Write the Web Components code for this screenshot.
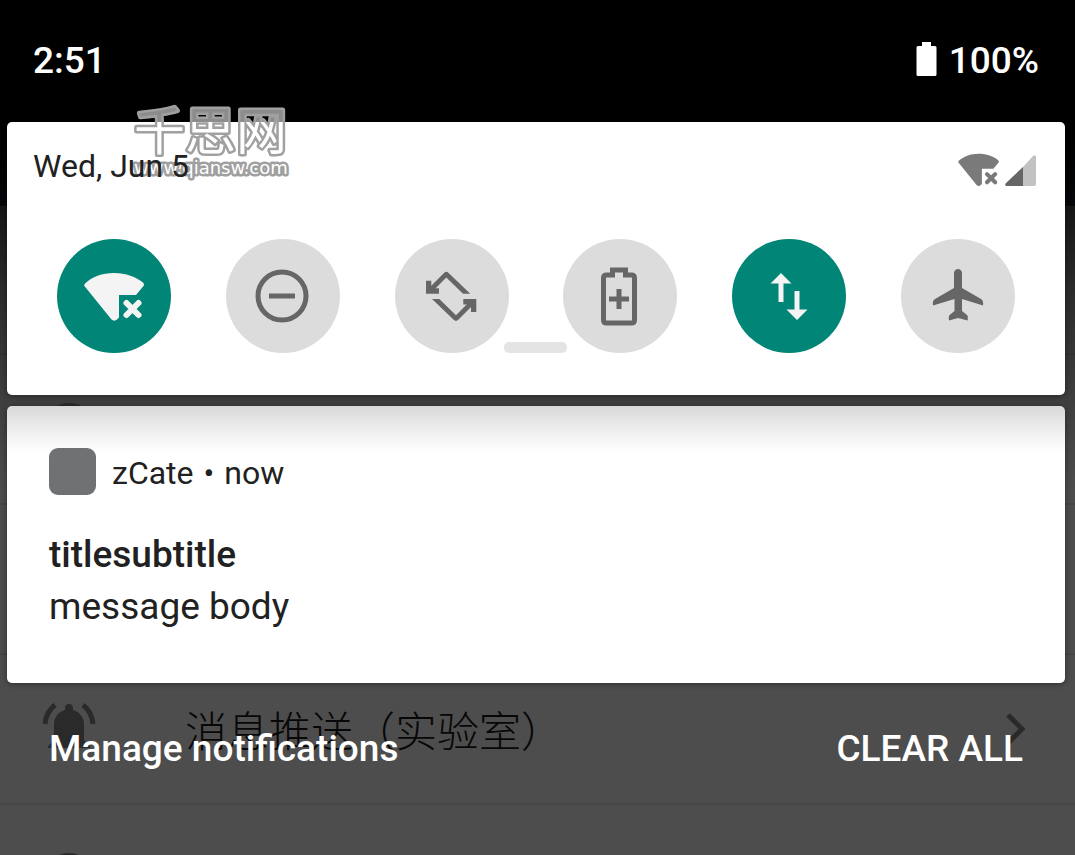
<!DOCTYPE html>
<html lang="en">
<head>
<meta charset="utf-8">
<meta name="viewport" content="width=device-width, initial-scale=1">
<title>Notifications</title>
<style>
    html, body {
        margin: 0;
        height: 100%;
    }
    body {
        background-color: #4d4d4d;
        font-family: Roboto, "Noto Sans CJK SC", sans-serif;
        color: #212121;
        overflow: hidden;
    }
</style>
</head>
<body>
<phone-screen>
    <settings-list slot="background"></settings-list>
    <status-bar time="2:51" battery="100%"></status-bar>
    <quick-settings date="Wed, Jun 5">
        <quick-tile icon="wifi" label="Wi-Fi" active></quick-tile>
        <quick-tile icon="dnd" label="Do not disturb"></quick-tile>
        <quick-tile icon="rotate" label="Auto-rotate"></quick-tile>
        <quick-tile icon="battery" label="Battery saver"></quick-tile>
        <quick-tile icon="data" label="Mobile data" active></quick-tile>
        <quick-tile icon="plane" label="Airplane mode"></quick-tile>
    </quick-settings>
    <notification-card app="zCate" when="now">
        <span slot="title">titlesubtitle</span>
        <span slot="body">message body</span>
    </notification-card>
    <shade-footer></shade-footer>
    <water-mark slot="overlay"></water-mark>
</phone-screen>

<script>
const icons = {
    wifi: `<path fill="currentColor" d="M1 14.500C8 8 18 4 30 4s22 4 29 9.500c1 1 1.300 2.500.500 3.500L52 26H35v22.500l-2 2c-1.500 1.500-4 1.500-5.500 0L.800 17.500c-.900-1-.700-2.200.200-3z"/>
        <path stroke="currentColor" stroke-width="6" stroke-linecap="round" d="M42.500 34l12 12M54.500 34l-12 12"/>`,
    dnd: `<circle cx="29" cy="30" r="24" fill="none" stroke="currentColor" stroke-width="5"/><path stroke="currentColor" stroke-width="5" d="M16 30h26"/>`,
    rotate: `<g fill="currentColor"><path d="M6 23L22 7q2.300-2.300 4.600 0L48.300 27.700H41L24.300 11.500 11 25z"/><path d="M4 14.700h5.300v7.600H17v5.400H4z"/></g>
        <g fill="currentColor" transform="rotate(180 29.150 30.400)"><path d="M6 23L22 7q2.300-2.300 4.600 0L48.300 27.700H41L24.300 11.500 11 25z"/><path d="M4 14.700h5.300v7.600H17v5.400H4z"/></g>`,
    battery: `<path fill="none" stroke="currentColor" stroke-width="5" d="M22.500 4h13v5h6q3 0 3 3v42q0 3-3 3h-25q-3 0-3-3V12q0-3 3-3h6z"/>
        <path stroke="currentColor" stroke-width="5" d="M19 33h20M29 23v20"/>`,
    data: `<path fill="currentColor" d="M22 7l10.500 10.500h-8V36h-5V17.500h-8zM38 54L27.500 43.500h8V25h5v18.500h8z"/>`,
    plane: `<path fill="currentColor" d="M30 3c2.200 0 4 1.800 4 4v15l19 11c2 1.300 2.500 3 2 6.500L34 33v12l5 4c.800.800 1 1.500.700 5.500L30 52l-9 2.500c-.500-3.500-.200-4.500.700-5.500l4.800-4V33L5 39.500c-.500-3.500 0-5.200 2-6.500l19-11V7c0-2.200 1.800-4 4-4z"/>`
};

class PhoneScreen extends HTMLElement {

    constructor() {
        super();
        this.shadow = this.attachShadow({ mode: 'open' });
    }

    connectedCallback() {
        this.shadow.innerHTML =
        `
        <style>
            :host {
                display: grid;
                grid-template: 100% / 100%;
                height: 100%;
                overflow: hidden;
            }
            .background, .shade, .overlay {
                grid-area: 1 / 1;
                min-height: 0;
            }
            .shade {
                display: flex;
                flex-direction: column;
            }
            .overlay {
                z-index: 1;
                pointer-events: none;
            }
        </style>
        <div class="background"><slot name="background"></slot></div>
        <main class="shade"><slot></slot></main>
        <div class="overlay"><slot name="overlay"></slot></div>
        `;
    }
}

class SettingsList extends HTMLElement {

    constructor() {
        super();
        this.shadow = this.attachShadow({ mode: 'open' });
    }

    connectedCallback() {
        this.shadow.innerHTML =
        `
        <style>
            :host {
                display: block;
                height: 100%;
                overflow: hidden;
                background: linear-gradient(#000 0, #000 130px, #05070a 206px, #161616 206px, #2c2c2c 290px, #3d3d3d 390px, #4d4d4d 490px);
            }
            .header {
                height: 205px;
            }
            .row {
                display: flex;
                align-items: center;
                box-sizing: border-box;
                height: 150px;
                padding: 0 35px 0 39px;
                border-bottom: 2px solid rgba(0,0,0,.08);
                color: #070707;
            }
            .row svg {
                flex: none;
                width: 60px;
                height: 60px;
                color: #2a2a2a;
            }
            .row span {
                flex: 1;
                margin-left: 86px;
                font-family: "Noto Sans CJK SC", sans-serif;
                font-size: 42px;
                font-weight: 300;
                line-height: 60px;
            }
        </style>
        <div class="header"></div>
        <div class="row"></div>
        <div class="row"><svg viewBox="0 0 60 60"><circle cx="30" cy="30" r="26" fill="currentColor"/></svg></div>
        <div class="row"></div>
        <div class="row">
            <svg viewBox="0 0 60 60">
                <path fill="currentColor" d="M26 9q0-4 4-4t4 4v2q11 3 11 15v15l6 6v2H9v-2l6-6V26q0-12 11-15z"/>
                <path fill="none" stroke="currentColor" stroke-width="5" d="M6 25Q7 13 16 6M54 25Q53 13 44 6"/>
            </svg>
            <span>消息推送（实验室）</span>
            <svg viewBox="0 0 60 60"><path fill="none" stroke="currentColor" stroke-width="5" d="M28 16l14 14-14 14"/></svg>
        </div>
        <div class="row"><svg viewBox="0 0 60 60"><circle cx="30" cy="30" r="26" fill="currentColor"/></svg></div>
        `;
    }
}

class StatusBar extends HTMLElement {

    constructor() {
        super();
        this.shadow = this.attachShadow({ mode: 'open' });
    }

    connectedCallback() {
        this.shadow.innerHTML =
        `
        <style>
            :host {
                display: flex;
                flex: none;
                justify-content: space-between;
                align-items: center;
                box-sizing: border-box;
                height: 122px;
                padding: 0 36px 0 33px;
                background-color: #000;
                color: #fff;
                font-size: 37px;
                font-weight: 500;
                line-height: 44px;
            }
            .battery {
                display: flex;
                align-items: center;
                gap: 12px;
            }
            svg {
                width: 21px;
                height: 34px;
                padding-bottom: 4px;
            }
        </style>
        <time>${this.getAttribute('time')}</time>
        <div class="battery">
            <svg viewBox="0 0 21 34"><path fill="#fff" d="M6 0h9v4h4q1.500 0 1.500 1.500v27q0 1.500-1.500 1.500H2q-1.500 0-1.500-1.500v-27Q.500 4 2 4h4z"/></svg>
            <span>${this.getAttribute('battery')}</span>
        </div>
        `;
    }
}

class QuickSettings extends HTMLElement {

    constructor() {
        super();
        this.shadow = this.attachShadow({ mode: 'open' });
    }

    connectedCallback() {
        this.shadow.innerHTML =
        `
        <style>
            :host {
                display: block;
                position: relative;
                margin: 0 10px 11px 7px;
                padding-bottom: 42px;
                background-color: #fff;
                border-radius: 5px;
                box-shadow: 0 1px 6px rgba(0,0,0,.4);
            }
            header {
                display: flex;
                justify-content: space-between;
                align-items: center;
                height: 88px;
                padding: 0 29px 0 26px;
                font-size: 32px;
                line-height: 40px;
            }
            /* the date stays readable above the watermark */
            .date {
                position: relative;
                z-index: 2;
            }
            .signals {
                display: flex;
                align-items: flex-end;
                gap: 6px;
                padding-top: 8px;
                color: #7a7a7a;
            }
            .signals svg {
                display: block;
            }
            .tiles {
                display: flex;
                justify-content: space-between;
                padding: 29px 50px 0;
            }
            .handle {
                position: absolute;
                bottom: 42px;
                left: calc(50% - 32px);
                width: 63px;
                height: 11px;
                border-radius: 5px;
                background-color: #e4e4e4;
            }
        </style>
        <header>
            <span class="date">${this.getAttribute('date')}</span>
            <div class="signals">
                <svg width="41" height="34" viewBox="0 3 60 50">${icons.wifi}</svg>
                <svg width="31" height="32" viewBox="0 0 31 32">
                    <path fill="#c2c2c2" d="M18 12L28 1q3-2 3 1v27q0 2-2 2H18z"/>
                    <path fill="#666" d="M18 12v19H2q-3 0-1-3z"/>
                </svg>
            </div>
        </header>
        <div class="tiles"><slot></slot></div>
        <div class="handle"></div>
        `;
    }
}

class QuickTile extends HTMLElement {

    constructor() {
        super();
        this.shadow = this.attachShadow({ mode: 'open' });
    }

    connectedCallback() {
        this.shadow.innerHTML =
        `
        <style>
            :host {
                display: block;
            }
            button {
                display: flex;
                justify-content: center;
                align-items: center;
                width: 114px;
                height: 114px;
                padding: 0;
                border: none;
                border-radius: 50%;
                background-color: #dcdcdc;
                color: #666;
            }
            :host([active]) button {
                background-color: #008577;
                color: #f4f4f4;
            }
            svg {
                width: 60px;
                height: 60px;
            }
        </style>
        <button aria-label="${this.getAttribute('label')}" aria-pressed="${this.hasAttribute('active')}">
            <svg viewBox="${this.getAttribute('icon') === 'wifi' ? '0 -3 60 60' : '0 0 60 60'}">${icons[this.getAttribute('icon')]}</svg>
        </button>
        `;
    }
}

class NotificationCard extends HTMLElement {

    constructor() {
        super();
        this.shadow = this.attachShadow({ mode: 'open' });
    }

    connectedCallback() {
        this.shadow.innerHTML =
        `
        <style>
            :host {
                display: block;
                margin: 0 10px 0 7px;
                padding: 42px 42px 50px;
                background: linear-gradient(#d8d8d8, #ececec 22px, #fff 46px);
                border-radius: 5px;
                box-shadow: 0 1px 6px rgba(0,0,0,.4);
            }
            header {
                display: flex;
                align-items: center;
                gap: 16px;
                margin-bottom: 34px;
                font-size: 32px;
                line-height: 43px;
            }
            .app-icon {
                width: 47px;
                height: 47px;
                border-radius: 9px;
                background-color: #707173;
            }
            .source {
                display: flex;
                gap: 10px;
                padding-top: 4px;
            }
            h2, p {
                margin: 0;
                font-size: 37px;
                line-height: 52px;
            }
            h2 {
                font-weight: 500;
            }
        </style>
        <article>
            <header>
                <div class="app-icon"></div>
                <div class="source"><span>${this.getAttribute('app')}</span><span>•</span><span>${this.getAttribute('when')}</span></div>
            </header>
            <h2><slot name="title"></slot></h2>
            <p><slot name="body"></slot></p>
        </article>
        `;
    }
}

class ShadeFooter extends HTMLElement {

    constructor() {
        super();
        this.shadow = this.attachShadow({ mode: 'open' });
    }

    connectedCallback() {
        this.shadow.innerHTML =
        `
        <style>
            :host {
                display: flex;
                justify-content: space-between;
                padding: 44px 52px 0 49px;
                z-index: 1;
            }
            button {
                padding: 0;
                border: none;
                background: none;
                color: #fff;
                font-family: inherit;
                font-size: 37px;
                font-weight: 500;
                line-height: 44px;
            }
        </style>
        <button>Manage notifications</button>
        <button>CLEAR ALL</button>
        `;
    }
}

class WaterMark extends HTMLElement {

    constructor() {
        super();
        this.shadow = this.attachShadow({ mode: 'open' });
    }

    connectedCallback() {
        this.shadow.innerHTML =
        `
        <style>
            :host {
                display: block;
                padding: 100px 0 0 130px;
            }
            svg {
                display: block;
                overflow: visible;
            }
            text {
                stroke: #a0a0a0;
                stroke-width: 5px;
                stroke-linejoin: round;
                paint-order: stroke;
            }
            .name {
                font-family: "Noto Sans CJK SC", sans-serif;
                font-size: 51px;
                font-weight: 400;
            }
            .site {
                font-family: "DejaVu Sans", sans-serif;
                font-size: 18px;
                fill: #fff;
            }
        </style>
        <svg width="180" height="95" viewBox="0 0 180 95">
            <linearGradient id="ink" gradientUnits="userSpaceOnUse" x1="0" y1="0" x2="0" y2="44">
                <stop offset=".5" stop-color="#8c8c8c"/>
                <stop offset=".5" stop-color="#fff"/>
            </linearGradient>
            <text class="name" x="4" y="50" fill="url(#ink)">千思网</text>
            <text class="site" x="4" y="74">www.qiansw.com</text>
        </svg>
        `;
    }
}

customElements.define('phone-screen', PhoneScreen);
customElements.define('settings-list', SettingsList);
customElements.define('status-bar', StatusBar);
customElements.define('quick-settings', QuickSettings);
customElements.define('quick-tile', QuickTile);
customElements.define('notification-card', NotificationCard);
customElements.define('shade-footer', ShadeFooter);
customElements.define('water-mark', WaterMark);
</script>
</body>
</html>
